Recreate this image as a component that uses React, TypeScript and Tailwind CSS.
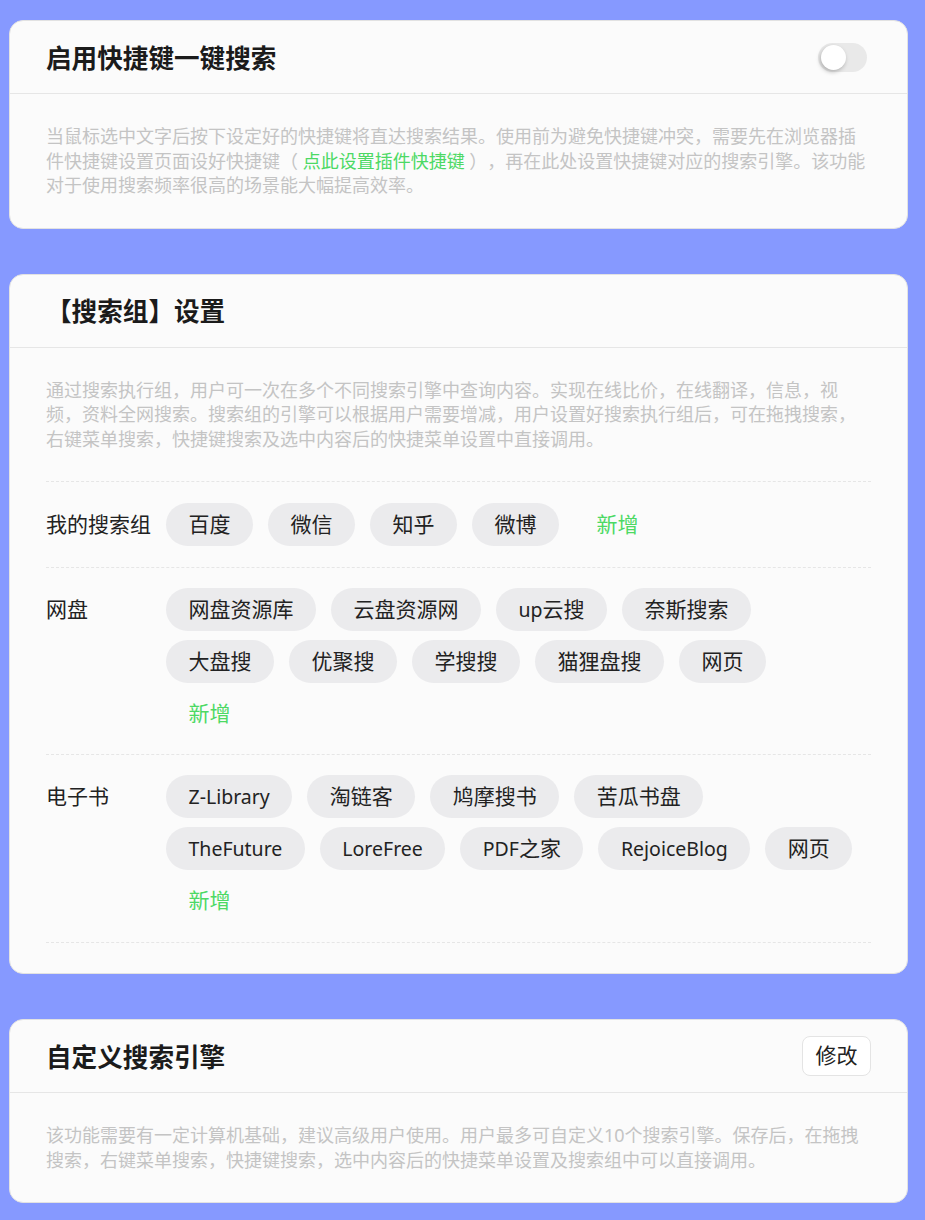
import React from "react";

const FONT = { fontFamily: '"Noto Sans", "Noto Sans CJK SC", sans-serif' };

function Label({ text }: { text: string }) {
  const parts = text.split(/([A-Za-z\-]+)/).filter((p) => p.length > 0);
  return (
    <>
      {parts.map((p, i) =>
        /^[A-Za-z\-]+$/.test(p) ? (
          <span key={i} className="text-[19.5px]">
            {p}
          </span>
        ) : (
          <span key={i}>{p}</span>
        )
      )}
    </>
  );
}

function Chip({ label }: { label: string }) {
  return (
    <div className="mr-[15px] flex h-[43px] items-center whitespace-nowrap rounded-full bg-[#ebebed] px-[22.5px] text-[21px] text-[#222]">
      <Label text={label} />
    </div>
  );
}

function AddChip() {
  return (
    <div className="mr-[15px] flex h-[43px] items-center px-[22.5px] text-[21px] text-[#4cd964]">
      新增
    </div>
  );
}

function GroupRow({ label, items, pad }: { label: string; items: string[]; pad: string }) {
  return (
    <div className={`flex border-b border-dashed border-[#e6e6e6] ${pad}`}>
      <div className="flex h-[43px] w-[120px] shrink-0 items-center text-[21px] text-[#222]">{label}</div>
      <div className="flex flex-1 flex-wrap gap-y-[9px]">
        {items.map((it, i) => (
          <Chip key={i} label={it} />
        ))}
        <AddChip />
      </div>
    </div>
  );
}

function Card({ title, right, children }: { title: string; right?: React.ReactNode; children: React.ReactNode }) {
  return (
    <div className="w-[899px] rounded-[14px] border border-[#e2e2e2] bg-[#fbfbfb]">
      <div className="flex h-[73px] items-center justify-between border-b border-[#e6e6e6] px-[36px]">
        <div className="pt-[4px] text-[25.6px] font-bold text-[#1b1b1b]">{title}</div>
        {right}
      </div>
      <div className="px-[36px] pt-[30px] pb-[30px]">{children}</div>
    </div>
  );
}

function Toggle() {
  return (
    <div className="relative mr-[4px] h-[29px] w-[49px] rounded-full bg-[#e9e9e9]">
      <div className="absolute left-[3px] top-[2px] h-[25px] w-[25px] rounded-full bg-white shadow-[-1px_2px_4px_rgba(0,0,0,0.25)]" />
    </div>
  );
}

export default function App() {
  return (
    <div
      className="min-h-[1220px] bg-[#8699ff] pl-[9px] pt-[20px] pb-[17px] [text-spacing-trim:space-all]"
      style={FONT}
    >
      <div className="flex flex-col gap-[45px]">
        <Card title="启用快捷键一键搜索" right={<Toggle />}>
          <p className="text-[18px] leading-[24.5px] text-[#c4c4c4]">
            当鼠标选中文字后按下设定好的快捷键将直达搜索结果。使用前为避免快捷键冲突，需要先在浏览器插件快捷键设置页面设好快捷键（{" "}
            <span className="text-[#4cd964]">点此设置插件快捷键</span> ），再在此处设置快捷键对应的搜索引擎。该功能对于使用搜索频率很高的场景能大幅提高效率。
          </p>
        </Card>

        <Card title="【搜索组】设置">
          <p className="text-[18px] leading-[24.5px] text-[#c4c4c4]">
            通过搜索执行组，用户可一次在多个不同搜索引擎中查询内容。实现在线比价，在线翻译，信息，视频，资料全网搜索。搜索组的引擎可以根据用户需要增减，用户设置好搜索执行组后，可在拖拽搜索，右键菜单搜索，快捷键搜索及选中内容后的快捷菜单设置中直接调用。
          </p>
          <div className="mt-[30px] border-t border-dashed border-[#e6e6e6]">
            <GroupRow label="我的搜索组" items={["百度", "微信", "知乎", "微博"]} pad="py-[21px]" />
            <GroupRow
              label="网盘"
              items={["网盘资源库", "云盘资源网", "up云搜", "奈斯搜索", "大盘搜", "优聚搜", "学搜搜", "猫狸盘搜", "网页"]}
              pad="pt-[20px] pb-[19px]"
            />
            <GroupRow
              label="电子书"
              items={["Z-Library", "淘链客", "鸠摩搜书", "苦瓜书盘", "TheFuture", "LoreFree", "PDF之家", "RejoiceBlog", "网页"]}
              pad="py-[20px]"
            />
          </div>
        </Card>

        <Card
          title="自定义搜索引擎"
          right={
            <button className="flex h-[40px] w-[69px] items-center justify-center rounded-[8px] border border-[#e4e4e4] bg-white text-[21px] text-[#222]">
              修改
            </button>
          }
        >
          <p className="text-[18px] leading-[24.5px] text-[#c4c4c4]">
            该功能需要有一定计算机基础，建议高级用户使用。用户最多可自定义10个搜索引擎。保存后，在拖拽搜索，右键菜单搜索，快捷键搜索，选中内容后的快捷菜单设置及搜索组中可以直接调用。
          </p>
        </Card>
      </div>
    </div>
  );
}
